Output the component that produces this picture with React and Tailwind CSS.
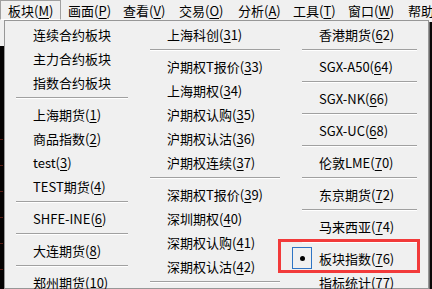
import React from "react";

const menuBar = [
  { t: "板块(", a: "M", e: ")", w: "w-[61px]", pressed: true },
  { t: "画面(", a: "P", e: ")", w: "w-[55px]" },
  { t: "查看(", a: "V", e: ")", w: "w-[56px]" },
  { t: "交易(", a: "O", e: ")", w: "w-[59px]" },
  { t: "分析(", a: "A", e: ")", w: "w-[55px]" },
  { t: "工具(", a: "T", e: ")", w: "w-[55px]" },
  { t: "窗口(", a: "W", e: ")", w: "w-[60px]" },
  { t: "帮助", a: "", e: "", w: "w-[40px]" },
];

const SEP = "sep";

// [text before, underlined char, text after]
const col1 = [
  ["连续合约板块", "", ""],
  ["主力合约板块", "", ""],
  ["指数合约板块", "", ""],
  SEP,
  ["上海期货(", "1", ")"],
  ["商品指数(", "2", ")"],
  ["test(", "3", ")"],
  ["TEST期货(", "4", ")"],
  SEP,
  ["SHFE-INE(", "6", ")"],
  SEP,
  ["大连期货(", "8", ")"],
  SEP,
  ["郑州期货(", "1", "0)"],
];

const col2 = [
  ["上海科创(", "3", "1)"],
  SEP,
  ["沪期权T报价(", "3", "3)"],
  ["上海期权(", "3", "4)"],
  ["沪期权认购(", "3", "5)"],
  ["沪期权认沽(", "3", "6)"],
  ["沪期权连续(", "3", "7)"],
  SEP,
  ["深期权T报价(", "3", "9)"],
  ["深圳期权(", "4", "0)"],
  ["深期权认购(", "4", "1)"],
  ["深期权认沽(", "4", "2)"],
  SEP,
];

const col3 = [
  ["香港期货(", "6", "2)"],
  SEP,
  ["SGX-A50(", "6", "4)"],
  SEP,
  ["SGX-NK(", "6", "6)"],
  SEP,
  ["SGX-UC(", "6", "8)"],
  SEP,
  ["伦敦LME(", "7", "0)"],
  SEP,
  ["东京期货(", "7", "2)"],
  SEP,
  ["马来西亚(", "7", "4)"],
  SEP,
  ["板块指数(", "7", "6)", true],
  ["指标统计(", "7", "7)"],
];

const Label = ({ t, a, e }) => (
  <span className="whitespace-nowrap">
    {t}
    {a && <span className="underline decoration-1 underline-offset-[2px]">{a}</span>}
    {e}
  </span>
);

const Column = ({ items, width }) => (
  <div className={`flex flex-col ${width}`}>
    {items.map((it, i) =>
      it === SEP ? (
        <div key={i} className="h-[8px] flex flex-col justify-center mx-[11px]">
          <div className="h-px bg-[#a0a0a0]" />
          <div className="h-px bg-white" />
        </div>
      ) : (
        <div key={i} className="h-[24px] flex items-center">
          <div className="w-[28px] h-full flex items-center">
            {it[3] && (
              <div className="ml-[1px] w-[20px] h-[22px] border border-[#2e74c4] flex items-center justify-center">
                <div className="w-[5px] h-[5px] rounded-full bg-black" />
              </div>
            )}
          </div>
          <Label t={it[0]} a={it[1]} e={it[2]} />
        </div>
      )
    )}
  </div>
);

export default function App() {
  return (
    <div
      className="relative w-[432px] h-[289px] overflow-hidden bg-black text-[13px] text-black leading-none"
      style={{ fontFamily: '"Noto Sans CJK SC", "Noto Sans", sans-serif' }}
    >
      {/* menu bar */}
      <div className="h-[20px] bg-[#f0f0f0] flex items-stretch">
        <div className="w-px" />
        {menuBar.map((m, i) => (
          <div
            key={i}
            className={`${m.w} shrink-0 flex items-center pl-[7px] ${
              m.pressed ? "border border-[#a0a0a0] border-b-white" : ""
            }`}
          >
            <Label t={m.t} a={m.a} e={m.e} />
          </div>
        ))}
      </div>

      <div className="flex h-[269px]">
        {/* window edge left */}
        <div className="w-[4px] flex flex-col">
          <div className="h-[26px] bg-[#f0f0f0]" />
          <div className="flex-1 bg-[#050303] flex flex-col gap-[25px] pt-[93px]">
            {[0, 1, 2, 3, 4, 5].map((k) => (
              <div key={k} className="h-px w-[3px] bg-[#5a1c14]" />
            ))}
          </div>
        </div>

        {/* dropdown */}
        <div className="w-[425px] border border-[#979797] bg-[#f0f0f0] pt-px flex items-start">
          <Column items={col1} width="w-[134px]" />
          <Column items={col2} width="w-[152px]" />
          <Column items={col3} width="w-[137px]" />
        </div>

        {/* window edge right */}
        <div className="flex-1 flex flex-col">
          <div className="h-[2px] bg-[#f0f0f0]" />
          <div className="flex-1 bg-[#0a0808] border-l border-[#6a6a6a]" />
        </div>
      </div>

      {/* red annotation box */}
      <div className="absolute left-[278px] top-[239px] w-[142px] h-[34px] border-[3px] border-[#f23a3a]" />
    </div>
  );
}
